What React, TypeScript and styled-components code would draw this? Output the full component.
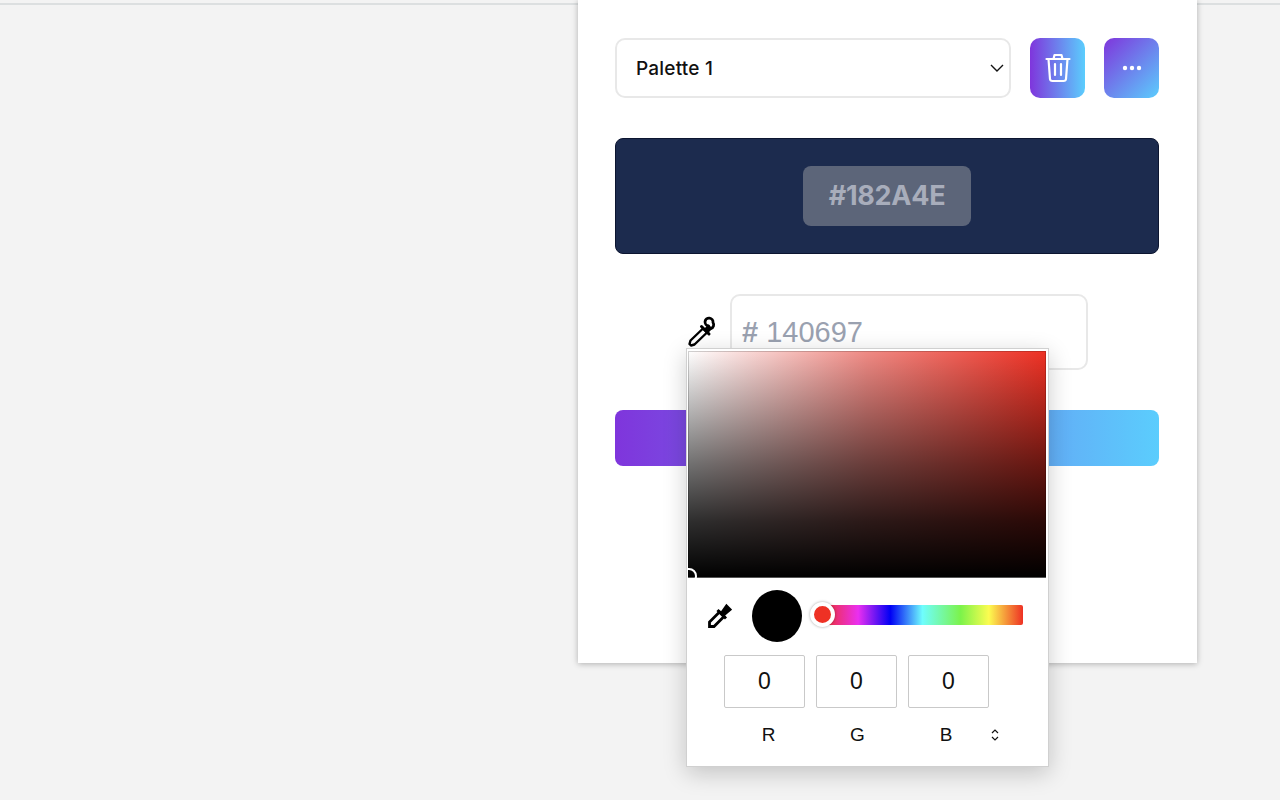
import React from 'react'
import styled, { createGlobalStyle } from 'styled-components'

const GlobalStyle = createGlobalStyle`
  html, body {
    margin: 0;
    padding: 0;
    background: #f3f3f3;
  }
  body {
    font-family: Inter, "Liberation Sans", sans-serif;
    overflow: hidden;
  }
`

const Page = styled.div`
  position: relative;
  width: 1280px;
  height: 800px;
  overflow: hidden;
  padding-left: 578px;
  box-sizing: border-box;
  background: linear-gradient(#f3f3f3 3px, #dcdfe0 3px, #dcdfe0 5px, #f3f3f3 5px);
`

const Panel = styled.main`
  width: 619px;
  height: 663px;
  box-sizing: border-box;
  padding: 38px 38px 0 37px;
  background: #fff;
  box-shadow: 0 1px 6px rgba(0, 0, 0, 0.28);
  display: flex;
  flex-direction: column;
`

const PaletteRow = styled.div`
  display: flex;
  gap: 19px;
  height: 60px;
`

const SelectBox = styled.div`
  width: 396px;
  box-sizing: border-box;
  border: 2px solid #e8e8e8;
  border-radius: 10px;
  padding: 0 5px 0 19px;
  display: flex;
  align-items: center;
  justify-content: space-between;
  font-size: 19px;
  font-weight: 500;
  letter-spacing: 0.2px;
  color: #111;
`

const GradientButton = styled.button<{ $angle: number }>`
  width: 55px;
  padding: 0;
  border: 0;
  border-radius: 10px;
  background: linear-gradient(${p => p.$angle}deg, #7f35dc, #5bcdfd);
  display: flex;
  align-items: center;
  justify-content: center;
  color: #fff;
`

const Swatch = styled.div`
  margin-top: 40px;
  height: 116px;
  box-sizing: border-box;
  border: 1px solid #0c1530;
  border-radius: 8px;
  background: #1c2b4e;
  display: flex;
  align-items: center;
  justify-content: center;
`

const HexBadge = styled.div`
  width: 168px;
  height: 60px;
  box-sizing: border-box;
  padding-bottom: 2px;
  border-radius: 8px;
  background: #5c6579;
  color: #a8adbb;
  font-size: 27px;
  font-weight: 700;
  letter-spacing: -0.3px;
  display: flex;
  align-items: center;
  justify-content: center;
`

const InputRow = styled.div`
  margin-top: 40px;
  display: flex;
  gap: 14px;
  padding-left: 73px;
  align-items: flex-start;
`

const DropperSlot = styled.div`
  width: 28px;
  height: 76px;
  padding-top: 22px;
  box-sizing: border-box;
`

const HexInput = styled.div`
  width: 358px;
  height: 76px;
  box-sizing: border-box;
  border: 2px solid #e8e8e8;
  border-radius: 10px;
  padding: 19px 0 0 10px;
  color: #9aa1b0;
  font-family: "Liberation Sans", Arial, sans-serif;
  font-size: 29px;
  line-height: 34px;
`

const HashMark = styled.span`
  font-weight: 700;
`

const SaveBar = styled.div`
  margin-top: 40px;
  height: 56px;
  border-radius: 8px;
  background: linear-gradient(90deg, #7f35dc, #5bcdfd);
`

const Picker = styled.div`
  position: absolute;
  left: 686px;
  top: 348px;
  width: 363px;
  height: 419px;
  box-sizing: border-box;
  padding: 2px 2px 0 1px;
  background: #fff;
  border: 1px solid #d0d0d0;
  box-shadow: 0 6px 22px rgba(0, 0, 0, 0.2);
  display: flex;
  flex-direction: column;
`

const Saturation = styled.div`
  position: relative;
  height: 227px;
  flex: none;
  overflow: hidden;
  background:
    linear-gradient(
      to top,
      #000 0%,
      rgba(0, 0, 0, 0.82) 25%,
      rgba(0, 0, 0, 0.56) 50%,
      rgba(0, 0, 0, 0.28) 75%,
      transparent 100%
    ),
    linear-gradient(to right, #fff 0%, #f08a84 50%, #ee3124 100%);
  box-shadow:
    inset 0 -1px 0 #555,
    inset 0 0 0 1px rgba(0, 0, 0, 0.18);
`

const SatHandle = styled.div`
  position: absolute;
  left: -7px;
  bottom: -6px;
  width: 12px;
  height: 12px;
  border: 2px solid #fff;
  border-radius: 50%;
`

const ControlRow = styled.div`
  margin-top: 11px;
  height: 54px;
  display: flex;
  align-items: center;
  padding-left: 18px;
`

const PreviewDot = styled.div`
  margin-left: 20px;
  width: 50px;
  height: 52px;
  border-radius: 50%;
  background: #000;
  flex: none;
`

const HueTrack = styled.div`
  position: relative;
  margin: -2px 0 0 20px;
  width: 201px;
  height: 20px;
  border-radius: 2px;
  background: linear-gradient(
    90deg,
    #ee3124 0%,
    #ea2ff0 18%,
    #0000f5 34%,
    #6ffdfd 50%,
    #7cf34a 69%,
    #fcfc50 83%,
    #ee3124 100%
  );
`

const HueHandle = styled.div`
  position: absolute;
  left: -12px;
  top: -3px;
  width: 25px;
  height: 25px;
  box-sizing: border-box;
  border: 4px solid #fff;
  border-radius: 50%;
  background: #ee3124;
  box-shadow: 0 0 3px rgba(0, 0, 0, 0.35);
`

const FieldRow = styled.div`
  margin-top: 12px;
  padding-left: 36px;
  display: flex;
  gap: 11px;
`

const Field = styled.div`
  width: 81px;
  height: 53px;
  box-sizing: border-box;
  border: 1px solid #c9c9c9;
  border-radius: 2px;
  display: flex;
  align-items: center;
  justify-content: center;
  font-family: "Liberation Sans", Arial, sans-serif;
  font-size: 23px;
  color: #111;
`

const LabelRow = styled.div`
  margin-top: 16px;
  height: 22px;
  display: grid;
  grid-template-columns: 89px 89px 88px 40px;
  padding-left: 36px;
  font-family: "Liberation Sans", Arial, sans-serif;
  font-size: 19px;
  color: #111;
  align-items: center;
`

const Label = styled.span`
  text-align: center;
`

const DropperIcon = () => (
  <svg width="29" height="31" viewBox="0 0 29 31" fill="none" stroke="#000" strokeWidth="2.4" strokeLinejoin="round" strokeLinecap="round" style={{ display: 'block' }}>
    <path d="M15 12.5 L19 16.5 L6.5 28.5 L3 29.5 L1.5 28 L2.5 24.5 Z" />
    <path d="M13.5 10.5 L21 18" strokeWidth="3" />
    <path d="M17.5 13 L20.5 10 L23 12.5 L20 15.5 Z" fill="#000" />
    <path d="M20.5 10 A4 4 0 1 1 25 6.5 A4 4 0 0 1 23 12.5" strokeWidth="2.8" />
  </svg>
)

const SmallDropper = () => (
  <svg width="26" height="28" viewBox="0 0 26 28" fill="none" stroke="#000" strokeWidth="2.8" strokeLinejoin="miter" style={{ display: 'block' }}>
    <path d="M13.5 10 L18 14.5 L8 24.5 L3.5 24.5 L3.5 20 Z" />
    <path d="M11.5 8 L20 16.5" strokeWidth="3" />
    <path d="M15.5 11 L20.5 4 L24 7.5 L17.5 13 Z" fill="#000" />
  </svg>
)

const App = () => {
  return (
    <Page>
      <GlobalStyle />
      <Panel>
        <PaletteRow>
          <SelectBox>
            Palette 1
            <svg width="14" height="8" viewBox="0 0 14 8" fill="none" stroke="#111" strokeWidth="1.4">
              <path d="M1 1 L7 7 L13 1" />
            </svg>
          </SelectBox>
          <GradientButton $angle={90}>
            <svg width="26" height="30" viewBox="0 0 26 30" fill="none" stroke="#fff" strokeWidth="2.2" strokeLinecap="round" strokeLinejoin="round">
              <path d="M1.5 6 H24.5" />
              <path d="M8.5 6 L9.5 2 H16.5 L17.5 6" />
              <path d="M3.5 6 L5 26 Q5.2 28 7.5 28 H18.5 Q20.8 28 21 26 L22.5 6" />
              <path d="M10 11 V22 M16 11 V22" />
            </svg>
          </GradientButton>
          <GradientButton $angle={135}>
            <svg width="20" height="6" viewBox="0 0 20 6" fill="#fff">
              <circle cx="3" cy="3" r="2.2" />
              <circle cx="10" cy="3" r="2.2" />
              <circle cx="17" cy="3" r="2.2" />
            </svg>
          </GradientButton>
        </PaletteRow>
        <Swatch>
          <HexBadge>#182A4E</HexBadge>
        </Swatch>
        <InputRow>
          <DropperSlot>
            <DropperIcon />
          </DropperSlot>
          <HexInput><HashMark>#</HashMark> 140697</HexInput>
        </InputRow>
        <SaveBar />
      </Panel>
      <Picker>
        <Saturation>
          <SatHandle />
        </Saturation>
        <ControlRow>
          <SmallDropper />
          <PreviewDot />
          <HueTrack>
            <HueHandle />
          </HueTrack>
        </ControlRow>
        <FieldRow>
          <Field>0</Field>
          <Field>0</Field>
          <Field>0</Field>
        </FieldRow>
        <LabelRow>
          <Label>R</Label>
          <Label>G</Label>
          <Label>B</Label>
          <svg width="10" height="14" viewBox="0 0 10 14" fill="none" stroke="#111" strokeWidth="1.2">
            <path d="M2 5 L5 2 L8 5 M2 9 L5 12 L8 9" />
          </svg>
        </LabelRow>
      </Picker>
    </Page>
  )
}

export default App
